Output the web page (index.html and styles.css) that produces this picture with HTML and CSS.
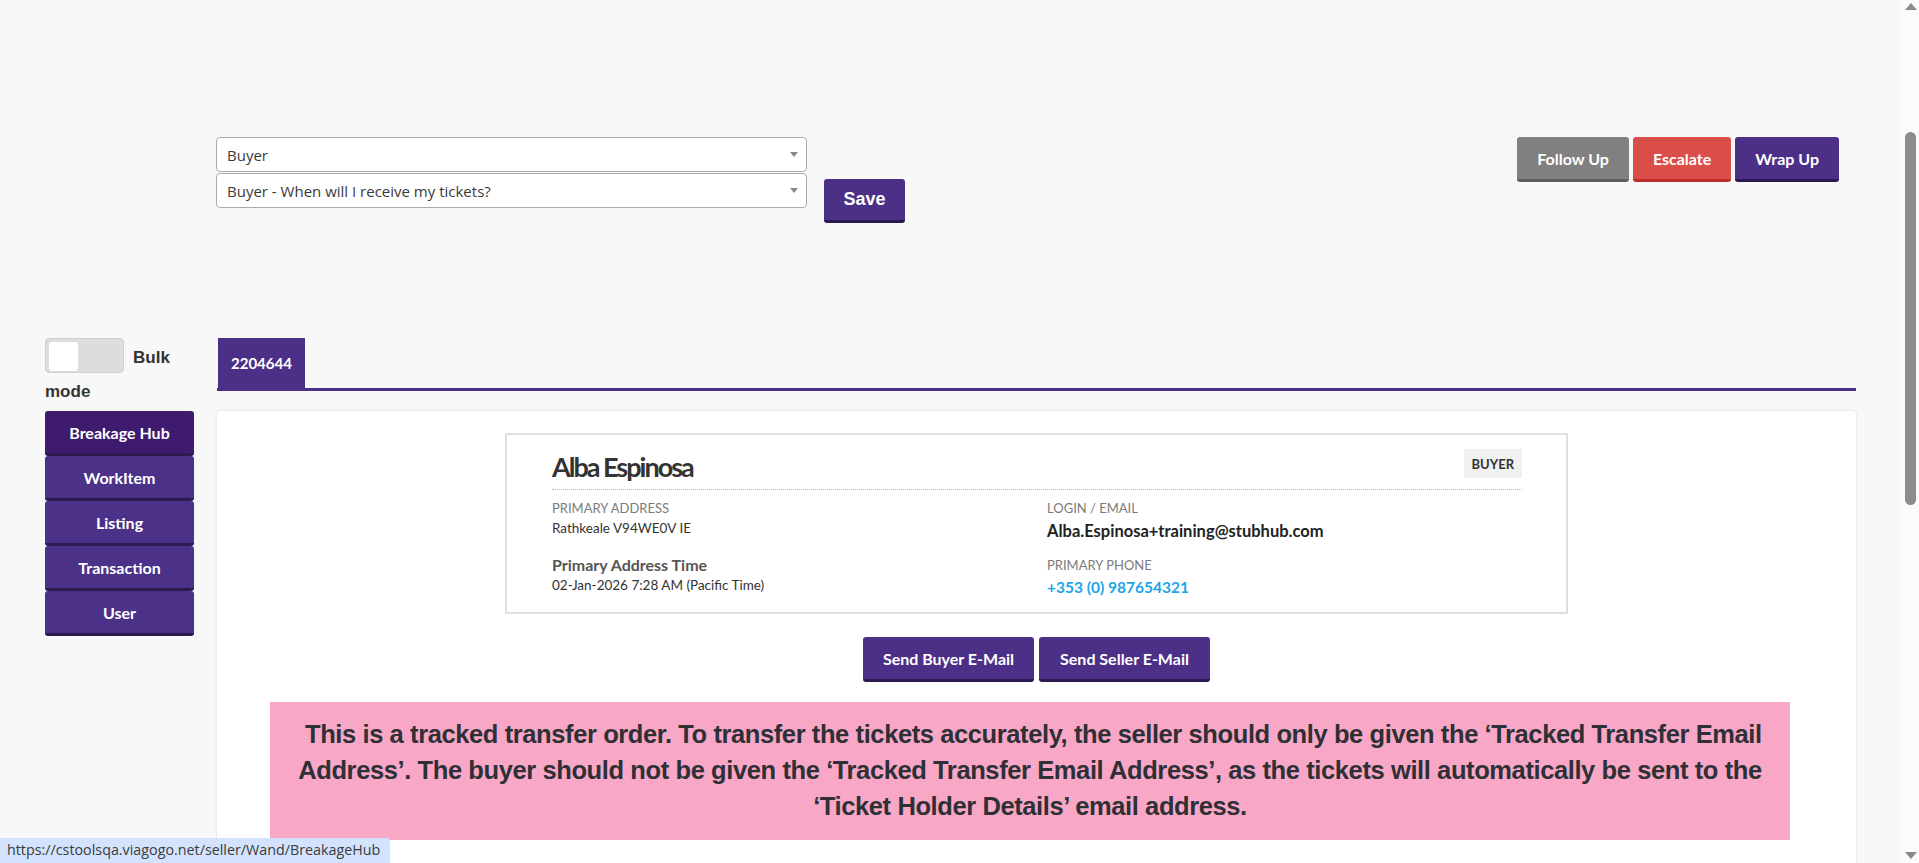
FILE: index.html
```html
<!DOCTYPE html>
<html lang="en">
<head>
<meta charset="utf-8">
<title>Breakage Hub</title>
<link rel="stylesheet" href="styles.css">
</head>
<body>
<div class="page">
  <header class="toolbar">
    <div class="classify">
      <div class="selects">
        <div class="select"><span>Buyer</span><i class="caret"></i></div>
        <div class="select"><span>Buyer - When will I receive my tickets?</span><i class="caret"></i></div>
      </div>
      <button class="btn-save">Save</button>
    </div>
    <div class="actions">
      <button class="btn btn-grey">Follow Up</button>
      <button class="btn btn-red">Escalate</button>
      <button class="btn btn-purple">Wrap Up</button>
    </div>
  </header>

  <div class="workspace">
    <aside class="sidebar">
      <div class="bulk"><span class="toggle"><span class="knob"></span></span>Bulk mode</div>
      <nav class="nav">
        <a class="nav-item active">Breakage Hub</a>
        <a class="nav-item">WorkItem</a>
        <a class="nav-item">Listing</a>
        <a class="nav-item">Transaction</a>
        <a class="nav-item">User</a>
      </nav>
    </aside>

    <main class="main">
      <div class="tabs"><span class="tab">2204644</span></div>
      <section class="panel">
        <div class="card">
          <div class="card-head">
            <h1 class="name">Alba Espinosa</h1>
            <span class="badge">BUYER</span>
          </div>
          <div class="card-body">
            <div class="col">
              <div class="label">PRIMARY ADDRESS</div>
              <div class="value">Rathkeale V94WE0V IE</div>
              <div class="subhead">Primary Address Time</div>
              <div class="value tight">02-Jan-2026 7:28 AM (Pacific Time)</div>
            </div>
            <div class="col">
              <div class="label">LOGIN / EMAIL</div>
              <div class="strong email">Alba.Espinosa+training@stubhub.com</div>
              <div class="label gap">PRIMARY PHONE</div>
              <div class="strong phone">+353 (0) 987654321</div>
            </div>
          </div>
        </div>
        <div class="mail-row">
          <button class="btn btn-purple btn-mail">Send Buyer E-Mail</button>
          <button class="btn btn-purple btn-mail">Send Seller E-Mail</button>
        </div>
        <div class="notice">&nbsp;This is a tracked transfer order. To transfer the tickets accurately, the seller should only be given the ‘Tracked Transfer Email Address’. The buyer should not be given the ‘Tracked Transfer Email Address’, as the tickets will automatically be sent to the ‘Ticket Holder Details’ email address.</div>
      </section>
    </main>
  </div>
</div>

<div class="scrollbar">
  <span class="sb-up"></span>
  <span class="sb-thumb"></span>
  <span class="sb-down"></span>
</div>
<div class="status">https://cstoolsqa.viagogo.net/seller/Wand/BreakageHub</div>
</body>
</html>
```
FILE: styles.css
```css
html, body {
  margin: 0;
  padding: 0;
  overflow: hidden;
  height: 863px;
  background: #f8f8f8;
}
body {
  font-family: Lato, "Open Sans", sans-serif;
  color: #333;
}
.page {
  width: 1900px;
}
button {
  font-family: Lato, sans-serif;
  border: 0;
  cursor: pointer;
}

/* toolbar */
.toolbar {
  display: flex;
  justify-content: space-between;
  align-items: flex-start;
  padding: 137px 61px 115px 216px;
}
.classify {
  display: flex;
  align-items: flex-start;
}
.selects {
  width: 591px;
  display: flex;
  flex-direction: column;
  gap: 1px;
}
.select {
  box-sizing: border-box;
  height: 35px;
  border: 1px solid #aaa;
  border-radius: 4px;
  background: #fff;
  display: flex;
  align-items: center;
  justify-content: space-between;
  padding: 0 8px 0 10px;
  font-family: "Open Sans", sans-serif;
  font-size: 15px;
  color: #3a3a3a;
}
.caret {
  width: 0;
  height: 0;
  border-left: 4px solid transparent;
  border-right: 4px solid transparent;
  border-top: 5px solid #888;
}
.btn-save {
  margin: 42px 0 0 17px;
  width: 81px;
  height: 44px;
  background: #4c3088;
  border-bottom: 3px solid #2a1a4f;
  border-radius: 3px;
  color: #fff;
  font-family: "Liberation Sans", Arial, sans-serif;
  font-weight: 700;
  font-size: 18px;
}
.actions {
  display: flex;
  gap: 4px;
}
.btn {
  height: 45px;
  padding: 0 20px;
  border-radius: 3px;
  color: #fff;
  font-weight: 700;
  font-size: 16px;
  border-bottom: 3px solid transparent;
}
.btn-grey { background: #808080; border-bottom-color: #5e5e5e; }
.btn-red { background: #da4e4a; border-bottom-color: #bf2d29; }
.btn-purple { background: #4c3088; border-bottom-color: #2a1a4f; }

/* workspace */
.workspace {
  display: flex;
  align-items: flex-start;
  padding-left: 45px;
}
.sidebar {
  width: 149px;
  flex: none;
}
.bulk {
  font-family: "Liberation Sans", Arial, sans-serif;
  font-weight: 700;
  font-size: 17px;
  line-height: 34px;
  color: #333;
  margin-bottom: 2px;
}
.toggle {
  display: inline-block;
  box-sizing: border-box;
  width: 79px;
  height: 35px;
  background: #ddd;
  border: 1px solid #d0d0d0;
  border-radius: 4px;
  vertical-align: -10px;
  margin-right: 9px;
  padding: 3px;
}
.knob {
  display: block;
  width: 29px;
  height: 29px;
  background: #fff;
  border-radius: 3px;
}
.nav {
  display: flex;
  flex-direction: column;
}
.nav-item {
  box-sizing: border-box;
  height: 45px;
  background: #4b3187;
  border-bottom: 3px solid #2b1b4f;
  border-radius: 3px;
  color: #fff;
  font-weight: 700;
  font-size: 16px;
  display: flex;
  align-items: center;
  justify-content: center;
}
.nav-item.active {
  background: #3f1b70;
}

.main {
  width: 1639px;
  margin-left: 23px;
}
.tabs {
  border-bottom: 3px solid #4c3088;
  display: flex;
  padding-left: 1px;
}
.tab {
  height: 50px;
  padding: 0 13px;
  background: #4c3088;
  color: #fff;
  font-weight: 700;
  font-size: 15px;
  display: flex;
  align-items: center;
}
.panel {
  margin-top: 20px;
  background: #fff;
  border-radius: 4px;
  box-shadow: 0 0 3px rgba(0, 0, 0, 0.12);
  padding: 22px 0 40px;
}
.card {
  box-sizing: border-box;
  width: 1063px;
  margin: 0 auto;
  border: 2px solid #e0e0e0;
  padding: 14px 44px 0 45px;
}
.card-head {
  display: flex;
  justify-content: space-between;
  align-items: flex-start;
  padding-bottom: 6px;
  border-bottom: 1px dotted #b5b5b5;
}
.name {
  margin: 2px 0 0;
  font-size: 27px;
  line-height: 32px;
  font-weight: 700;
  letter-spacing: -2px;
  color: #333;
}
.badge {
  height: 29px;
  padding: 0 8px;
  background: #f1f1f1;
  font-size: 13px;
  font-weight: 700;
  color: #333;
  display: flex;
  align-items: center;
}
.card-body {
  display: grid;
  grid-template-columns: 495px 1fr;
  padding: 10px 0 15px;
}
.label {
  font-size: 13px;
  line-height: 16px;
  color: #7b7b7b;
}
.label.gap {
  margin-top: 16px;
}
.value {
  font-size: 13.5px;
  line-height: 17px;
  color: #333;
  margin-top: 4px;
}
.value.tight {
  margin-top: 2.5px;
}
.subhead {
  margin-top: 17.5px;
  font-size: 16px;
  line-height: 20px;
  font-weight: 700;
  color: #555;
}
.strong {
  margin-top: 4.5px;
  font-size: 16px;
  line-height: 20px;
  font-weight: 700;
  color: #222;
}
.email {
  font-size: 16.5px;
}
.phone {
  font-size: 15.5px;
  color: #1ea4ea;
}
.mail-row {
  margin-top: 23px;
  display: flex;
  justify-content: center;
  gap: 5px;
}
.btn-mail {
  width: 171px;
  padding: 0;
}
.notice {
  margin: 20px 66px 0 53px;
  padding: 14px 10px 16px;
  background: #f8a8c6;
  text-align: center;
  font-family: "Liberation Sans", Arial, sans-serif;
  font-weight: 700;
  font-size: 25.5px;
  line-height: 36px;
  letter-spacing: -0.4px;
  color: #2f3036;
}

/* browser chrome overlays */
.scrollbar {
  position: fixed;
  top: 0;
  right: 0;
  width: 19px;
  height: 863px;
  background: #fbfbfb;
}
.sb-up, .sb-down {
  position: absolute;
  left: 5px;
  width: 0;
  height: 0;
  border-left: 6px solid transparent;
  border-right: 6px solid transparent;
}
.sb-up {
  top: 3px;
  border-bottom: 7px solid #8a8a8a;
}
.sb-down {
  bottom: 4px;
  border-top: 7px solid #8a8a8a;
}
.sb-thumb {
  position: absolute;
  left: 5px;
  top: 132px;
  width: 11px;
  height: 373px;
  border-radius: 6px;
  background: #8c8c8c;
}
.status {
  position: fixed;
  left: 0;
  bottom: 0;
  box-sizing: border-box;
  width: 390px;
  height: 25px;
  padding: 2px 0 0 7px;
  background: #d3e3fd;
  border-top-right-radius: 4px;
  font-family: "Open Sans", sans-serif;
  font-size: 14.3px;
  line-height: 20px;
  color: #3b3b3b;
  white-space: nowrap;
}
```
